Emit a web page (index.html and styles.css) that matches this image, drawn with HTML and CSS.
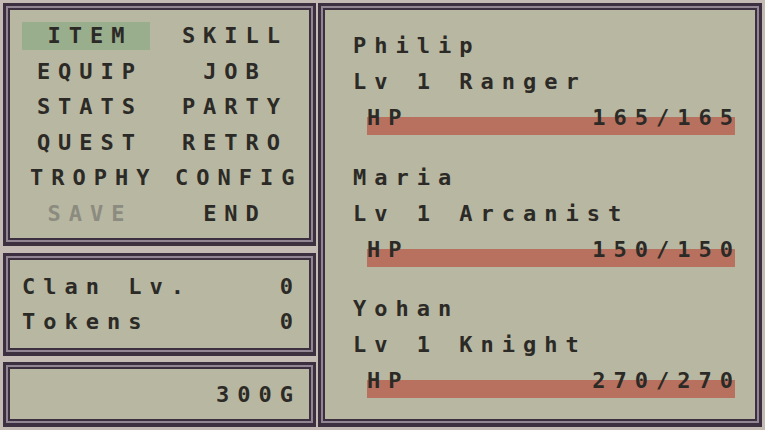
FILE: index.html
```html
<!DOCTYPE html>
<html lang="en">
<head>
  <meta charset="UTF-8">
  <meta name="viewport" content="width=device-width, initial-scale=1.0">
  <title>Menu</title>
  <link rel="stylesheet" href="styles.css">
</head>
<body>
  <div class="screen">
    <div class="left">
      <div class="panel menu">
        <div class="menu-item selected">ITEM</div>
        <div class="menu-item">SKILL</div>
        <div class="menu-item">EQUIP</div>
        <div class="menu-item">JOB</div>
        <div class="menu-item">STATS</div>
        <div class="menu-item">PARTY</div>
        <div class="menu-item">QUEST</div>
        <div class="menu-item">RETRO</div>
        <div class="menu-item">TROPHY</div>
        <div class="menu-item">CONFIG</div>
        <div class="menu-item disabled">SAVE</div>
        <div class="menu-item">END</div>
      </div>

      <div class="panel clan">
        <div class="line"><span>Clan Lv.</span><span class="num">0</span></div>
        <div class="line"><span>Tokens</span><span class="num">0</span></div>
      </div>

      <div class="panel gold">
        <span class="num">300G</span>
      </div>
    </div>

    <div class="panel party">
      <div class="member">
        <div class="line">Philip</div>
        <div class="line">Lv 1 Ranger</div>
        <div class="hp"><span>HP</span><span class="hp-val">165/165</span></div>
      </div>
      <div class="member">
        <div class="line">Maria</div>
        <div class="line">Lv 1 Arcanist</div>
        <div class="hp"><span>HP</span><span class="hp-val">150/150</span></div>
      </div>
      <div class="member">
        <div class="line">Yohan</div>
        <div class="line">Lv 1 Knight</div>
        <div class="hp"><span>HP</span><span class="hp-val">270/270</span></div>
      </div>
    </div>
  </div>
</body>
</html>
```

FILE: styles.css
```css
* {
  box-sizing: border-box;
}
body {
  margin: 0;
  padding: 0;
  background: #c3bbb4;
  font-family: 'DejaVu Sans Mono', 'Liberation Mono', monospace;
  font-size: 22px;
  font-weight: bold;
  letter-spacing: 8px;
  color: #2b2a26;
}
.screen {
  display: flex;
  gap: 2px;
  width: 765px;
  height: 430px;
  padding: 3px 3px 3px 3px;
}
.left {
  display: flex;
  flex-direction: column;
  width: 313px;
}
.panel {
  background: #b8b7a1;
  border: 3px solid #3b2f40;
  border-bottom-width: 4px;
  box-shadow: inset 0 0 0 2px #928694, inset 0 0 0 4px #3b2f40;
}

/* main menu */
.menu {
  height: 243px;
  display: grid;
  grid-template-columns: 128px 128px;
  grid-auto-rows: 28px;
  column-gap: 17px;
  row-gap: 7.6px;
  padding: 16px 0 0 16px;
}
.menu-item {
  text-align: center;
  line-height: 28px;
  padding-left: 8px;
}
.menu-item.selected {
  background: #99ae8d;
}
.menu-item.disabled {
  color: #8c8b80;
}

/* clan + gold */
.clan {
  height: 103px;
  margin-top: 7px;
  padding: 13px 12px 0 16px;
}
.line {
  display: flex;
  justify-content: space-between;
  line-height: 35px;
  height: 35px;
}
.gold {
  height: 65px;
  margin-top: 6px;
  display: flex;
  align-items: center;
  justify-content: flex-end;
  padding-right: 12px;
}

/* party */
.party {
  flex: 1;
  display: flex;
  flex-direction: column;
  gap: 23.5px;
  padding: 22px 0 0 32px;
}
.member .line {
  line-height: 36px;
  height: 36px;
}
.hp {
  display: flex;
  justify-content: space-between;
  width: 368px;
  margin-left: 14px;
  height: 36px;
  line-height: 36px;
  background: linear-gradient(#b8715f, #b8715f) 0 17px / 100% 18px no-repeat;
}
.hp-val {
  margin-right: -6px;
}
```
